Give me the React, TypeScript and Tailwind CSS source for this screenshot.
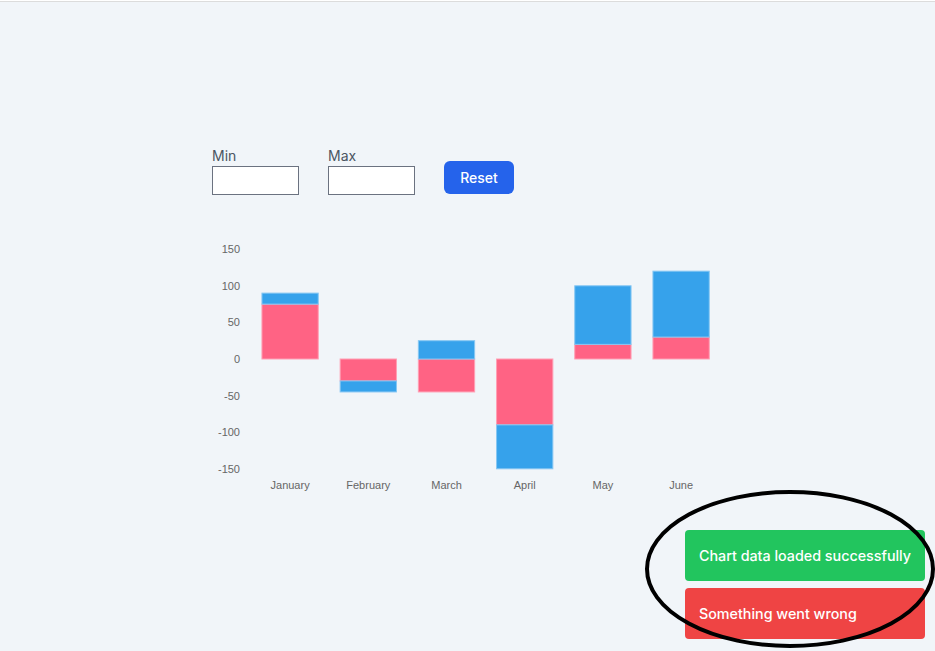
import React from 'react';

const labels = ['January', 'February', 'March', 'April', 'May', 'June'];
const red = [75, -30, -45, -90, 20, 30];
const blue = [15, -15, 25, -60, 80, 90];
const ticks = [150, 100, 50, 0, -50, -100, -150];

// chart geometry, in svg units
const zeroY = 119;
const perUnit = 0.732;
const plotLeft = 39;
const catW = 78.2;
const barW = 56.3;

function y(v: number) {
  return zeroY - v * perUnit;
}

function StackedBarChart() {
  const bars: React.ReactNode[] = [];
  labels.forEach((_, i) => {
    const x = plotLeft + catW * i + (catW - barW) / 2;
    let pos = 0;
    let neg = 0;
    const series = [
      { v: red[i], c: '#ff6384', s: '#ff9fb4' },
      { v: blue[i], c: '#36a2eb', s: '#86c7f3' },
    ];
    series.forEach((d, j) => {
      const base = d.v >= 0 ? pos : neg;
      const top = base + d.v;
      if (d.v >= 0) pos = top;
      else neg = top;
      const y1 = Math.min(y(base), y(top));
      const h = Math.abs(y(top) - y(base));
      bars.push(
        <rect
          key={`${i}-${j}`}
          x={x}
          y={y1}
          width={barW}
          height={h}
          fill={d.c}
          stroke={d.s}
          strokeWidth={1}
        />
      );
    });
  });

  return (
    <svg width={520} height={260} className="block" style={{ fontFamily: '"Liberation Sans", Arial, sans-serif' }}>
      {ticks.map((t) => (
        <text key={t} x={28} y={y(t) + 4} textAnchor="end" fontSize={11} fill="#666">
          {t}
        </text>
      ))}
      {bars}
      {labels.map((l, i) => (
        <text key={l} x={plotLeft + catW * i + catW / 2} y={249} textAnchor="middle" fontSize={11} fill="#666">
          {l}
        </text>
      ))}
    </svg>
  );
}

function Field({ label }: { label: string }) {
  return (
    <div className="flex flex-col">
      <label className="text-sm leading-5 text-[#4b5563]">{label}</label>
      <input type="text" className="w-[87px] h-[29px] bg-white border border-[#6b7280] px-1 text-sm outline-none" />
    </div>
  );
}

export default function App() {
  return (
    <div
      className="relative min-h-[651px] bg-[#f1f5f9] border-t border-[#dcdcdc] mt-px overflow-hidden"
      style={{ fontFamily: 'Inter, "Noto Sans", sans-serif' }}
    >
      <div className="pl-[212px] pt-[144px]">
        <div className="flex items-end gap-[29px]">
          <Field label="Min" />
          <Field label="Max" />
          <button className="mb-px w-[70px] h-[33px] rounded-md bg-[#2563eb] text-white text-sm font-medium">
            Reset
          </button>
        </div>
        <div className="mt-[45px]">
          <StackedBarChart />
        </div>
      </div>

      {/* Toasts */}
      <div className="absolute right-[10px] bottom-[13px] flex flex-col gap-[7px]">
        <div className="w-[240px] h-[51px] flex items-center pl-3.5 pt-px rounded bg-[#22c55e] text-white text-[14.3px] font-medium">
          Chart data loaded successfully
        </div>
        <div className="w-[240px] h-[51px] flex items-center pl-3.5 pt-px rounded bg-[#ef4444] text-white text-[14.3px] font-medium">
          Something went wrong
        </div>
      </div>

      {/* hand-drawn annotation */}
      <svg className="absolute inset-0 pointer-events-none" width={935} height={651}>
        <ellipse cx={790} cy={567} rx={143} ry={77} fill="none" stroke="#000" strokeWidth={4} />
      </svg>
    </div>
  );
}
